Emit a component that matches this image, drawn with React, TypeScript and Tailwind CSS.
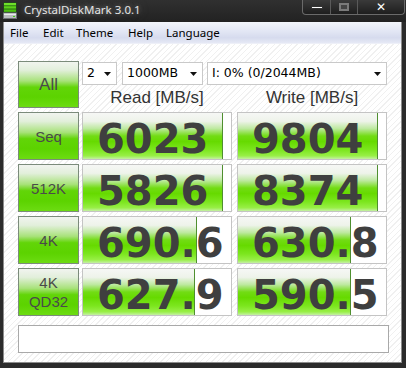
const rows = [
  { label: ['Seq'], read: '6023', readBar: 140, write: '9804', writeBar: 140 },
  { label: ['512K'], read: '5826', readBar: 140, write: '8374', writeBar: 140 },
  { label: ['4K'], read: '690.6', readBar: 114, write: '630.8', writeBar: 113 },
  { label: ['4K', 'QD32'], read: '627.9', readBar: 112, write: '590.5', writeBar: 113 },
]

const hatch =
  'bg-[repeating-linear-gradient(135deg,#ffffff_0px,#ffffff_3px,#f0f0f0_3px,#f0f0f0_4px)]'

const greenButton =
  'flex flex-col items-center justify-center border border-[#7b8b7b] bg-[linear-gradient(to_bottom,#f1f4ef_0%,#e2efdb_18%,#a8e27a_42%,#62d508_56%,#5cd300_78%,#6cdc12_100%)] font-["Liberation_Sans",Arial,sans-serif] text-[#4a4a4a]'

function AppIcon() {
  return (
    <svg width="14" height="17" viewBox="0 0 14 17">
      <rect x="0.5" y="0.5" width="13" height="10" fill="#1f5a12" />
      <rect x="1" y="1" width="12" height="2.4" fill="#6fe02a" />
      <rect x="1" y="4.2" width="12" height="2.4" fill="#5cd11a" />
      <rect x="1" y="7.4" width="12" height="2.4" fill="#4cbf10" />
      <rect x="0.5" y="11" width="13" height="5.5" fill="#b9bcbf" stroke="#6d7073" />
      <rect x="1" y="11.5" width="12" height="1.5" fill="#e9ebec" />
      <rect x="10" y="14" width="2" height="1" fill="#3fd010" />
    </svg>
  )
}

function Arrow() {
  return (
    <svg width="8" height="4" viewBox="0 0 8 4" className="shrink-0">
      <path d="M0 0 H7 L3.5 4 Z" fill="#111" />
    </svg>
  )
}

function Select({ value, width }: { value: string; width: string }) {
  return (
    <div
      className={`flex h-[23px] ${width} items-center justify-between border border-[#c9c9c9] bg-white pl-[4px] pr-[4px] font-["DejaVu_Sans",Verdana,sans-serif] text-[12.5px] text-black`}
    >
      <span>{value}</span>
      <Arrow />
    </div>
  )
}

function ValueCell({ value, bar }: { value: string; bar: number }) {
  return (
    <div className="relative h-[48px] w-[150px] border border-[#c4c4c4] bg-white">
      <div
        className="absolute inset-y-0 left-0 border-r border-[#4f8f2f] bg-[linear-gradient(to_bottom,#f6f7f5_0%,#eef3ea_18%,#bde99f_34%,#72dc14_50%,#66da00_62%,#7ce61e_80%,#98ef46_93%,#c4f0a4_100%)]"
        style={{ width: bar }}
      />
      <div className='relative h-[46px] pl-[14px] font-["DejaVu_Sans",Verdana,sans-serif] text-[40px] font-bold leading-[52px] text-[#3f3f3f]'>
        {value}
      </div>
    </div>
  )
}

export default function App() {
  return (
    <div className="flex h-[368px] w-[406px] flex-col overflow-hidden bg-[#2b2b2b]">
      {/* title bar */}
      <div className="flex h-[22px] shrink-0 items-start bg-[linear-gradient(to_bottom,#303030,#222222)]">
        <div className="ml-[3px] mt-[2px]">
          <AppIcon />
        </div>
        <div className='ml-[5px] mt-[3px] px-[2px] font-["Noto_Sans",sans-serif] text-[11.5px] leading-[14px] text-[#e4e4e4] [text-shadow:0_0_4px_rgba(120,120,120,0.9),0_0_8px_rgba(110,110,110,0.8)]'>
          CrystalDiskMark 3.0.1
        </div>
        <div className="ml-auto mr-[1px] flex h-[15px] overflow-hidden rounded-b-[4px] border border-t-0 border-[#6a6a6a] bg-[linear-gradient(to_bottom,#3a3a3a,#1e1e1e)]">
          <div className="flex w-[28px] items-center justify-center border-r border-[#5a5a5a]">
            <div className="mt-[1px] h-[3px] w-[12px] border border-[#333] bg-white" />
          </div>
          <div className="flex w-[27px] items-center justify-center border-r border-[#5a5a5a]">
            <div className="h-[8px] w-[10px] border-2 border-[#7a7a7a] bg-[#444]" />
          </div>
          <div className='flex w-[46px] items-center justify-center font-["DejaVu_Sans",sans-serif] text-[12px] font-bold leading-none text-white'>
            ✕
          </div>
        </div>
      </div>

      {/* client area */}
      <div className="ml-[3px] flex h-[341px] w-[399px] flex-col border-x border-b border-[#8c8c8c] bg-white">
        {/* menu */}
        <div className='flex h-[22px] shrink-0 items-center border-b border-[#eef0f8] bg-[linear-gradient(to_bottom,#f3f5fb_0%,#e4e8f5_40%,#d6dbee_75%,#e6e9f5_100%)] font-["Noto_Sans",sans-serif] text-[11.5px] text-black'>
          <span className="ml-[6px] w-[33px]">File</span>
          <span className="w-[33px]">Edit</span>
          <span className="w-[52px]">Theme</span>
          <span className="w-[38px]">Help</span>
          <span>Language</span>
        </div>

        <div className={`flex flex-1 flex-col pl-[14px] ${hatch}`}>
          {/* top section */}
          <div className="mt-[17px] flex">
            <div className={`${greenButton} h-[47px] w-[61px] text-[17px]`}>All</div>
            <div className="ml-[3px] flex w-[305px] flex-col">
              <div className="mt-[1px] flex">
                <Select value="2" width="w-[36px]" />
                <div className="ml-[5px]">
                  <Select value="1000MB" width="w-[81px]" />
                </div>
                <div className="ml-[4px]">
                  <Select value="I: 0% (0/2044MB)" width="w-[180px]" />
                </div>
              </div>
              <div className='mt-[3px] grid grid-cols-[150px_150px] gap-x-[5px] font-["Liberation_Sans",Arial,sans-serif] text-[17px] leading-[20px] text-[#333333]'>
                <div className="text-center">Read [MB/s]</div>
                <div className="text-center">Write [MB/s]</div>
              </div>
            </div>
          </div>

          {/* results */}
          <div className="mt-[4px] flex flex-col gap-[4px]">
            {rows.map((row) => (
              <div key={row.label.join(' ')} className="flex">
                <div className={`${greenButton} h-[48px] w-[61px] text-[15px] leading-[19px]`}>
                  {row.label.map((l) => (
                    <span key={l}>{l}</span>
                  ))}
                </div>
                <div className="ml-[3px]">
                  <ValueCell value={row.read} bar={row.readBar} />
                </div>
                <div className="ml-[5px]">
                  <ValueCell value={row.write} bar={row.writeBar} />
                </div>
              </div>
            ))}
          </div>

          {/* comment box */}
          <div className="mt-[9px] h-[28px] w-[371px] border border-[#a9a9a9] bg-white" />
        </div>
      </div>
    </div>
  )
}
